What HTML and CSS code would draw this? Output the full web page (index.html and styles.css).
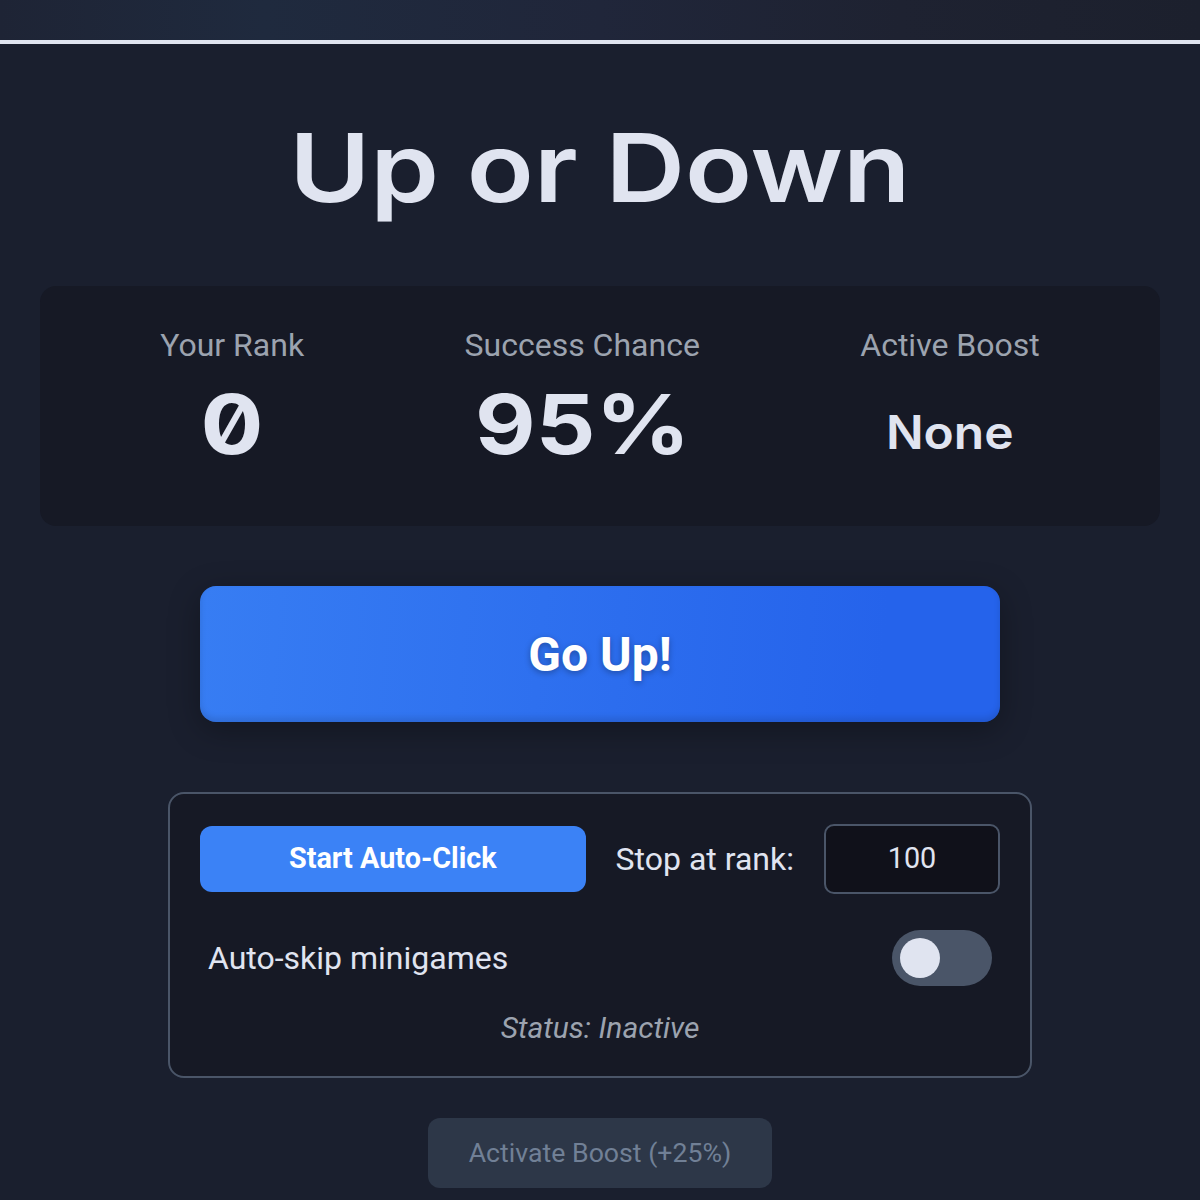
FILE: index.html
```html
<!DOCTYPE html><html lang="en">
<head>
  <meta charset="UTF-8">
  <title>Up or Down</title>
  <link rel="stylesheet" href="styles.css">
</head>
<body>
  <div class="topbar"></div>
  <h1 class="title">Up or Down</h1>
  <div class="stats">
    <div class="stat">
      <div class="stat-label">Your Rank</div>
      <div class="stat-value">0</div>
    </div>
    <div class="stat">
      <div class="stat-label">Success Chance</div>
      <div class="stat-value">95%</div>
    </div>
    <div class="stat">
      <div class="stat-label">Active Boost</div>
      <div class="stat-value small">None</div>
    </div>
  </div>
  <button class="go-up">Go Up!</button>
  <div class="auto-box">
    <div class="auto-row">
      <button class="auto-start">Start Auto-Click</button>
      <label class="auto-label">Stop at rank:</label>
      <input class="auto-input" type="text" value="100">
    </div>
    <div class="skip-row">
      <span class="skip-label">Auto-skip minigames</span>
      <div class="toggle"><div class="knob"></div></div>
    </div>
    <div class="status">Status: Inactive</div>
  </div>
  <button class="boost" disabled>Activate Boost (+25%)</button>
</body>
</html>
```

FILE: styles.css
```css
* {
  margin: 0;
  padding: 0;
  box-sizing: border-box;
  font-family: Roboto, sans-serif;
}

body {
  background-color: #1a1f2e;
  color: #e0e4f0;
  display: flex;
  flex-direction: column;
  align-items: center;
  height: 1200px;
  overflow: hidden;
}

.topbar {
  width: 100%;
  height: 44px;
  flex-shrink: 0;
  background: linear-gradient(90deg, #1e2435 0%, #1f2a3e 22%, #20263a 50%, #1e2231 75%, #1c202d 100%);
  border-bottom: 4px solid #e0e4f0;
}

.title {
  margin-top: 64px;
  height: 120px;
  line-height: 120px;
  font-family: Inter, sans-serif;
  font-size: 95px;
  font-weight: 600;
  text-align: center;
  transform: scaleX(1.16);
}

.stats {
  display: flex;
  justify-content: space-around;
  width: 1120px;
  height: 240px;
  margin-top: 58px;
  padding: 36px 40px;
  background-color: #161925;
  border-radius: 16px;
}

.stat {
  text-align: center;
}

.stat-label {
  font-size: 32px;
  line-height: 46px;
  color: #9ca3af;
}

.stat-value {
  margin-top: 12px;
  font-family: Inter, sans-serif;
  font-feature-settings: "zero";
  font-size: 82px;
  font-weight: 700;
  line-height: 90px;
  transform: scaleX(1.14);
}

.stat-value.small {
  margin-top: 24px;
  font-size: 46px;
  font-weight: 600;
  line-height: 80px;
  transform: scaleX(1.08);
}

.go-up {
  width: 800px;
  height: 136px;
  margin-top: 60px;
  flex-shrink: 0;
  border: none;
  border-radius: 16px;
  background: linear-gradient(95deg, #377df3, #2563eb 85%);
  box-shadow: 0 8px 32px rgba(0,0,0,0.3), inset 0 -4px 6px rgba(0,0,0,0.12);
  color: #fff;
  font-size: 48px;
  font-weight: 700;
  text-shadow: 0 2px 6px rgba(0,0,0,0.3);
}

.auto-box {
  width: 864px;
  height: 286px;
  margin-top: 70px;
  flex-shrink: 0;
  padding: 30px;
  background-color: #161925;
  border: 2px solid #4a5568;
  border-radius: 16px;
}

.auto-row {
  display: flex;
  align-items: center;
  gap: 30px;
}

.auto-start {
  flex: 1;
  height: 66px;
  border: none;
  border-radius: 12px;
  background-color: #3b82f6;
  color: #fff;
  font-size: 28.8px;
  font-weight: 700;
  padding-bottom: 2px;
}

.auto-label {
  font-size: 32px;
  color: #e0e4f0;
}

.auto-input {
  width: 176px;
  height: 70px;
  border: 2px solid #4a5568;
  border-radius: 10px;
  background-color: #10111a;
  color: #e0e4f0;
  font-size: 28.8px;
  text-align: center;
  padding-bottom: 2px;
}

.skip-row {
  display: flex;
  justify-content: space-between;
  align-items: center;
  margin-top: 36px;
  padding: 0 8px;
}

.skip-label {
  font-size: 32px;
}

.toggle {
  width: 100px;
  height: 56px;
  padding: 8px;
  border-radius: 28px;
  background-color: #4a5568;
}

.knob {
  width: 40px;
  height: 40px;
  border-radius: 50%;
  background-color: #e0e4f0;
}

.status {
  margin-top: 24px;
  font-size: 30px;
  font-style: italic;
  color: #9ca3af;
  text-align: center;
}

.boost {
  width: 344px;
  height: 70px;
  margin-top: 40px;
  flex-shrink: 0;
  border: none;
  border-radius: 12px;
  background-color: #2d3748;
  color: #718096;
  font-size: 26.7px;
}
```
